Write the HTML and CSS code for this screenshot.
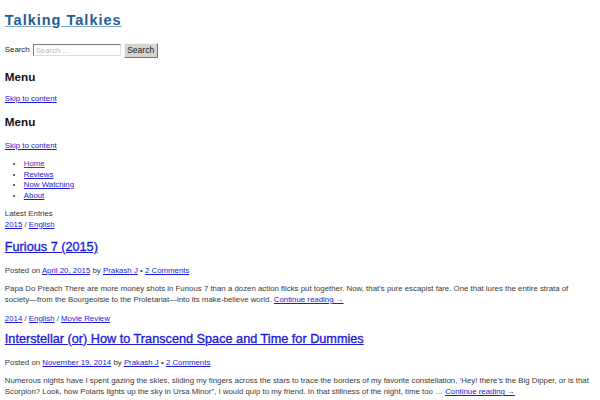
FILE: index.html
```html
<!DOCTYPE html>
<html lang="en">
<head>
    <meta charset="UTF-8">
    <title>Talking Talkies</title>
    <link rel="stylesheet" href="styles.css">
</head>
<body>
    <header class="site-header">
        <h1 class="site-title"><a href="#">Talking Talkies</a></h1>
        <form class="search-form">
            <label class="search-label">Search</label>
            <input class="search-field" type="text" placeholder="Search …">
            <button class="search-submit" type="button">Search</button>
        </form>
        <nav class="site-nav">
            <h3 class="menu-toggle">Menu</h3>
            <a class="skip-link" href="#">Skip to content</a>
            <h3 class="menu-toggle second">Menu</h3>
            <a class="skip-link second" href="#">Skip to content</a>
            <ul class="menu">
                <li><a class="visited" href="#">Home</a></li>
                <li><a href="#">Reviews</a></li>
                <li><a href="#">Now Watching</a></li>
                <li><a href="#">About</a></li>
            </ul>
        </nav>
    </header>

    <main>
        <div class="latest">Latest Entries</div>
        <div class="cats"><a href="#">2015</a> / <a href="#">English</a></div>

        <article class="post">
            <h2 class="post-title"><a href="#">Furious 7 (2015)</a></h2>
            <div class="post-meta">Posted on <a href="#">April 20, 2015</a> by <a href="#">Prakash J</a> • <a href="#">2 Comments</a></div>
            <p class="post-excerpt">Papa Do Preach There are more money shots in Furious 7 than a dozen action flicks put together. Now, that’s pure escapist fare. One that lures the entire strata of society&#8288;—from the Bourgeoisie to the Proletariat—into its make-believe world. <a href="#">Continue reading →</a></p>
        </article>

        <div class="cats"><a href="#">2014</a> / <a href="#">English</a> / <a href="#">Movie Review</a></div>

        <article class="post">
            <h2 class="post-title"><a href="#">Interstellar (or) How to Transcend Space and Time for Dummies</a></h2>
            <div class="post-meta">Posted on <a href="#">November 19, 2014</a> by <a href="#">Prakash J</a> • <a href="#">2 Comments</a></div>
            <p class="post-excerpt">Numerous nights have I spent gazing the skies, sliding my fingers across the stars to trace the borders of my favorite constellation, ‘Hey! there’s the Big Dipper, or is that Scorpion? Look, how Polaris lights up the sky in Ursa Minor”, I would quip to my friend. In that stillness of the night, time too … <a href="#">Continue reading →</a></p>
        </article>
    </main>
</body>
</html>
```

FILE: styles.css
```css
* {
    box-sizing: border-box;
}

body {
    margin: 0;
    padding: 0 3px 0 4.8px;
    font-family: 'Liberation Sans', Arial, sans-serif;
    font-size: 7.85px;
    line-height: 10.5px;
    color: #3a3a3a;
    background: #fff;
}

a {
    color: #1c1cd8;
}

a.visited {
    color: #6b2a9c;
}

.site-title {
    margin: 10px 0 0 0;
    font-size: 14.5px;
    line-height: 20px;
    font-weight: bold;
    letter-spacing: 1px;
}

.site-title a {
    color: #1f5d94;
    text-decoration-color: #7fa6cc;
}

.search-form {
    display: flex;
    align-items: center;
    height: 16px;
    margin-top: 12px;
    color: #222;
}

.search-label {
    margin-right: 3px;
}

.search-field {
    width: 88px;
    height: 12px;
    padding: 0 2px;
    font-family: inherit;
    font-size: 7.8px;
    border: 1px solid;
    border-color: #777 #ddd #ddd #777;
    background: #fff;
}

.search-field::placeholder {
    color: #bbb;
}

.search-submit {
    margin-left: 3px;
    width: 34px;
    height: 15px;
    padding: 0;
    font-family: inherit;
    font-size: 8.5px;
    color: #222;
    background: #d6d3cc;
    border: 1px solid;
    border-color: #f4f4f4 #777 #777 #f4f4f4;
}

.menu-toggle {
    margin: 12px 0 0 0;
    font-size: 11.7px;
    line-height: 14px;
    color: #111;
}

.menu-toggle.second {
    margin-top: 10.5px;
}

.skip-link {
    display: block;
    margin-top: 10px;
}

.skip-link.second {
    margin-top: 11.5px;
}

.menu {
    margin: 8px 0 0 0;
    padding-left: 19px;
}

.latest {
    margin-top: 8px;
    color: #333;
}

.cats {
    color: #333;
}

.post-title {
    margin: 8.5px 0 0 0;
    font-size: 12.7px;
    line-height: 17px;
    font-weight: normal;
    -webkit-text-stroke: 0.35px;
}

.post + .cats + .post .post-title {
    margin-top: 6.5px;
}

.post-meta {
    margin-top: 10.5px;
}

.post-excerpt {
    margin: 6.5px 0 8.5px 0;
    line-height: 11px;
}
```
